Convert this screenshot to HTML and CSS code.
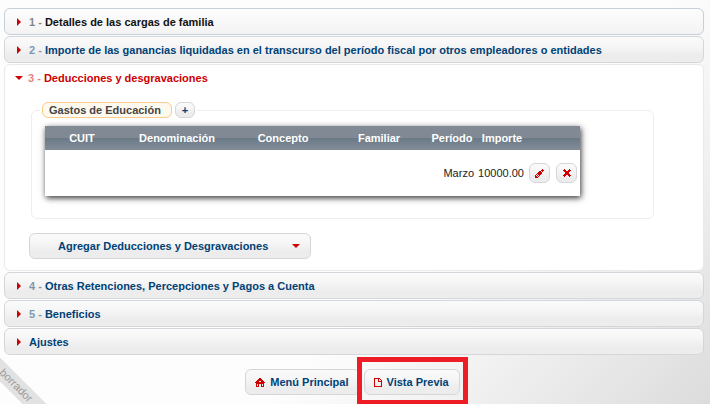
FILE: index.html
```html
<!DOCTYPE html>
<html lang="es">

<head>
    <meta charset="UTF-8">
    <meta name="viewport" content="width=device-width, initial-scale=1.0">
    <title>Deducciones y desgravaciones</title>
    <link rel="stylesheet" href="styles.css">
</head>

<body>
    <div class="page">
        <main class="accordion">
            <h3 class="section"><button type="button" class="section-header visited"><span class="arrow"></span><span><span class="number">1 - </span>Detalles de las cargas de familia</span></button></h3>
            <h3 class="section"><button type="button" class="section-header"><span class="arrow"></span><span><span class="number">2 - </span>Importe de las ganancias liquidadas en el transcurso del período fiscal por otros empleadores o entidades</span></button></h3>

            <section class="panel">
                <h3 class="section"><button type="button" class="section-header open" aria-expanded="true"><span class="arrow down"></span><span><span class="number">3 - </span>Deducciones y desgravaciones</span></button></h3>
                <div class="panel-content">
                    <fieldset class="group">
                        <legend class="group-legend">
                            <span class="group-title">Gastos de Educación</span>
                            <button type="button" class="button add">+</button>
                        </legend>
                        <table class="grid">
                            <colgroup>
                                <col class="col-cuit">
                                <col class="col-name">
                                <col class="col-wide">
                                <col class="col-wide">
                                <col class="col-small">
                                <col class="col-small">
                                <col class="col-actions">
                            </colgroup>
                            <thead>
                                <tr>
                                    <th>CUIT</th>
                                    <th>Denominación</th>
                                    <th>Concepto</th>
                                    <th>Familiar</th>
                                    <th>Período</th>
                                    <th>Importe</th>
                                    <th></th>
                                </tr>
                            </thead>
                            <tbody>
                                <tr>
                                    <td></td>
                                    <td></td>
                                    <td></td>
                                    <td></td>
                                    <td>Marzo</td>
                                    <td>10000.00</td>
                                    <td>
                                        <div class="actions">
                                            <button type="button" class="button icon-button" aria-label="Editar">
                                                <svg width="9" height="9" viewBox="0 0 9 9" fill="#c00" shape-rendering="crispEdges"><path d="M0 6h1v1h1v1h1v1H0zM1 5h1v1h1v1h1v1H3V7H2V6H1zM2 4h1V3h1V2h2v1h1v2H6v1H5v1H4V6H3V5H2zM7 0h1v1h1v1H8v1H7V2H6V1h1z"/></svg>
                                            </button>
                                            <button type="button" class="button icon-button" aria-label="Eliminar">
                                                <svg width="8" height="8" viewBox="0 0 8 8" fill="#c00"><path d="M1 0h1v1h1v1h2V1h1V0h1v1h1v1H7v1H6v2h1v1h1v1H7v1H6V7H5V6H3v1H2v1H1V7H0V6h1V5h1V3H1V2H0V1h1z"/></svg>
                                            </button>
                                        </div>
                                    </td>
                                </tr>
                            </tbody>
                        </table>
                    </fieldset>
                    <button type="button" class="button menu-button"><span>Agregar Deducciones y Desgravaciones</span><span class="arrow down"></span></button>
                </div>
            </section>

            <h3 class="section"><button type="button" class="section-header"><span class="arrow"></span><span><span class="number">4 - </span>Otras Retenciones, Percepciones y Pagos a Cuenta</span></button></h3>
            <h3 class="section"><button type="button" class="section-header"><span class="arrow"></span><span><span class="number">5 - </span>Beneficios</span></button></h3>
            <h3 class="section"><button type="button" class="section-header"><span class="arrow"></span><span>Ajustes</span></button></h3>
        </main>

        <footer class="footer">
            <button type="button" class="button footer-button">
                <svg width="10" height="9" viewBox="0 0 10 9" fill="#c00" fill-rule="evenodd" shape-rendering="crispEdges"><path d="M4 0h2v1h1v1h1v1h1v1h1v1H9v4H6V6H4v3H1V5H0V4h1V3h1V2h1V1h1zM4 3v1h2V3zM2 6v2h1V6zM7 6v2h1V6z"/></svg>
                Menú Principal
            </button>
            <div class="highlight">
                <button type="button" class="button footer-button">
                    <svg width="8" height="9" viewBox="0 0 8 9" fill="#c00" fill-rule="evenodd" shape-rendering="crispEdges"><path d="M0 0h6v1h1v1h1v7H0zM1 1v7h6V4H4V1zM5 1v2h2V2H6V1z"/></svg>
                    Vista Previa
                </button>
            </div>
        </footer>
        <div class="ribbon">borrador</div>
    </div>
</body>

</html>
```
FILE: styles.css
```css
body {
    margin: 0;
    font-family: "Liberation Sans", Arial, sans-serif;
    font-size: 11px;
    color: #222;
}

.page {
    position: relative;
    box-sizing: border-box;
    min-height: 100vh;
    padding: 8px 6px 0 4px;
    overflow: hidden;
    background: linear-gradient(135deg, #fdfdfd 60%, #f0f0f0 78%, #dcdcdc 100%);
}

.accordion {
    display: flex;
    flex-direction: column;
    gap: 1px;
}

.section {
    margin: 0;
}

.section-header,
.button {
    box-sizing: border-box;
    border: 1px solid #d3d7db;
    border-radius: 6px;
    background: linear-gradient(#fafafa, #f6f6f6 35%, #ececec 75%, #ededed);
    color: #004276;
    font: bold 11px "Liberation Sans", Arial, sans-serif;
}

.section-header {
    display: flex;
    align-items: center;
    gap: 5px;
    width: 100%;
    height: 27px;
    padding: 0 12px 0 11px;
    text-align: left;
}

.section-header.visited {
    border-color: #c5d0da;
    background: linear-gradient(#fdfdfd, #f3f3f3);
    color: #111;
}

.section-header.open {
    height: 25px;
    border-color: transparent;
    background: none;
    color: #c00;
}

.number {
    opacity: 0.5;
}

/* the slot stays the same size in both directions */
.arrow {
    display: flex;
    width: 8px;
}

.arrow::before {
    content: "";
    margin-left: 1px;
    border: 4px solid transparent;
    border-left: 4px solid #c00;
    border-right: 0;
}

.arrow.down::before {
    margin-left: 0;
    border: 4px solid transparent;
    border-top: 4px solid #c00;
    border-bottom: 0;
}

.panel {
    border: 1px solid #eaeaea;
    border-radius: 6px;
    background: #fff;
}

.panel .section-header {
    padding-left: 9px;
}

.panel-content {
    padding: 12px 49px 11px 24px;
}

.group {
    min-width: 0;
    margin: 0 0 14px 2px;
    padding: 8px 13px 22px;
    border: 1px solid #eee;
    border-radius: 6px;
}

.group-legend {
    display: flex;
    gap: 3px;
    margin-left: -5px;
    padding: 0 2px;
}

.group-title {
    box-sizing: border-box;
    height: 16px;
    padding: 0 10px 0 6px;
    border: 1px solid #fbcb8c;
    border-radius: 6px;
    background: #fdf9ee;
    color: #444;
    font-weight: bold;
    line-height: 15px;
}

.add {
    width: 20px;
    height: 16px;
    padding: 0;
}

.grid {
    width: 535px;
    max-width: 100%;
    table-layout: fixed;
    border-collapse: collapse;
    background: #fff;
    box-shadow: 1px 2px 6px #333;
}

.col-cuit {
    width: 74px;
}

.col-name {
    width: 116px;
}

.col-wide {
    width: 96px;
}

.col-small {
    width: 50px;
}

.grid thead {
    background: linear-gradient(#818a94 50%, #6a7986 50%, #828d99);
}

.grid th {
    height: 24px;
    padding: 0;
    color: #fff;
}

.grid td {
    height: 46px;
    padding: 0 3px 0 0;
    text-align: right;
}

.actions {
    display: flex;
    justify-content: flex-end;
    gap: 6px;
}

.icon-button {
    display: flex;
    align-items: center;
    justify-content: center;
    width: 21px;
    height: 20px;
    padding: 0;
}

.menu-button {
    display: flex;
    align-items: center;
    justify-content: space-between;
    width: 282px;
    height: 26px;
    padding: 0 10px 0 28px;
}

.footer {
    display: flex;
    justify-content: center;
    gap: 4px;
    padding: 14px 3px 0 0;
}

.footer-button {
    display: flex;
    align-items: center;
    gap: 5px;
    height: 26px;
    padding: 0 10px 0 9px;
}

.highlight {
    position: relative;
}

.highlight::after {
    content: "";
    position: absolute;
    inset: -12px -8px -10px -7px;
    border: 5px solid #ee1c25;
    pointer-events: none;
}

.ribbon {
    position: absolute;
    bottom: 10px;
    left: -54px;
    width: 140px;
    background: #e2e2e2;
    color: #999;
    font-size: 11px;
    line-height: 17px;
    text-align: center;
    transform: rotate(45deg);
}
```
